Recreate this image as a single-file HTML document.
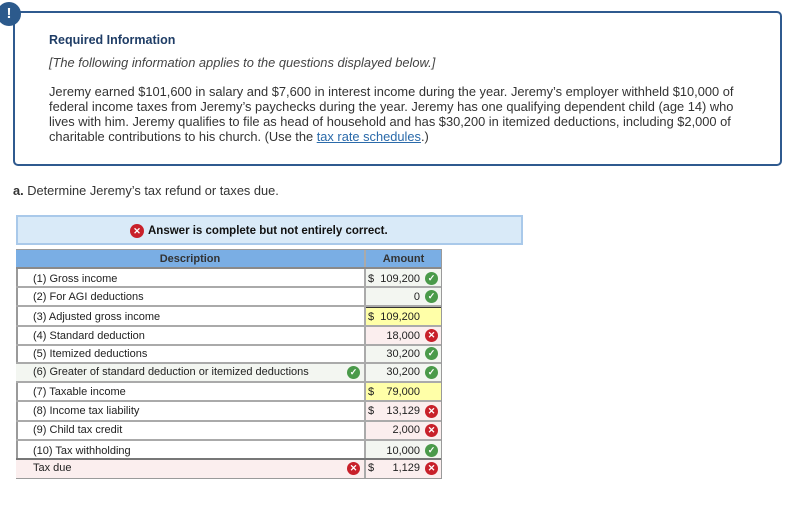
<!DOCTYPE html>
<html><head><meta charset="utf-8"><style>
*{margin:0;padding:0;box-sizing:border-box}
body{width:811px;height:511px;background:#fff;position:relative;font-family:"Liberation Sans",Arial,sans-serif;overflow:hidden}
.a{position:absolute;white-space:nowrap}
.box{left:13px;top:11px;width:769px;height:155px;border:2px solid #2f5a8f;border-radius:5px}
.ex{left:-3px;top:2px;width:24px;height:24px;border-radius:50%;background:#2c5a8c;color:#fff;font-weight:bold;font-size:15px;text-align:center;line-height:24px}
.t{font-size:12.85px;color:#333;left:49px}
.row{position:absolute;left:16px;width:425px;font-size:11px;color:#222}
.d{position:absolute;left:0;width:350px;top:0;bottom:0;border-right:2px solid #aaa;padding-left:17px}
.m{position:absolute;left:350px;width:75px;top:0;bottom:0;text-align:right;padding-right:21px}
.ic{position:absolute;width:13px;height:13px;border-radius:50%;color:#fff;font-size:9px;line-height:13px;text-align:center;font-weight:bold}
.ok{background:#4a9a4a}.no{background:#c8202a}
</style></head><body>
<div class="a box"></div>
<div class="a ex">!</div>
<div class="a" style="left:49px;top:33px;font-size:12.5px;font-weight:bold;color:#1f3d66">Required Information</div>
<div class="a t" style="top:55px;font-style:italic;color:#444">[The following information applies to the questions displayed below.]</div>
<div class="a t" style="top:84px">Jeremy earned $101,600 in salary and $7,600 in interest income during the year. Jeremy’s employer withheld $10,000 of</div>
<div class="a t" style="top:99px">federal income taxes from Jeremy’s paychecks during the year. Jeremy has one qualifying dependent child (age 14) who</div>
<div class="a t" style="top:114px">lives with him. Jeremy qualifies to file as head of household and has $30,200 in itemized deductions, including $2,000 of</div>
<div class="a t" style="top:129px">charitable contributions to his church. (Use the <span style="color:#2a6aaa;text-decoration:underline">tax rate schedules</span>.)</div>
<div class="a" style="left:13px;top:183px;font-size:12.8px;color:#333"><b>a.</b> Determine Jeremy’s tax refund or taxes due.</div>

<div class="a" style="left:16px;top:215px;width:507px;height:30px;background:#d9eaf8;border:2px solid #a9c9ea"></div>
<div class="a ic no" style="left:130px;top:224px;width:14px;height:14px;line-height:14px">✕</div>
<div class="a" style="left:148px;top:223px;font-size:11.5px;font-weight:bold;color:#111;line-height:16px">Answer is complete but not entirely correct.</div>

<div class="a" style="left:16px;top:249px;width:426px;height:230px;border:2px solid #9a9a9a;background:#fff"></div>
<div class="row" style="top:250px;height:19px;background:#7aaee4;border-bottom:2px solid #8a8a8a"><div class="d" style="text-align:center;padding:3px 0 0;font-weight:bold;color:#333;font-size:11px">Description</div><div class="m" style="text-align:center;padding:3px 0 0;font-weight:bold;color:#333">Amount</div></div>

<div class="row" style="top:269px;height:19px;border-bottom:2px solid #aaa"><div class="d" style="padding-top:4px">(1) Gross income</div><div class="m" style="background:#f3f6f1;padding-top:4px"><span style="position:absolute;left:2px">$</span>109,200</div><span class="ic ok" style="left:409px;top:3px">✓</span></div>
<div class="row" style="top:288px;height:19px;border-bottom:2px solid #aaa"><div class="d" style="padding-top:3px">(2) For AGI deductions</div><div class="m" style="background:#f3f6f1;padding-top:3px">0</div><span class="ic ok" style="left:409px;top:2px">✓</span></div>
<div class="row" style="top:307px;height:20px;border-bottom:2px solid #aaa"><div class="d" style="padding-top:4px">(3) Adjusted gross income</div><div class="m" style="background:#ffffa8;border-top:1px solid #333;padding-top:3px"><span style="position:absolute;left:2px">$</span>109,200</div></div>
<div class="row" style="top:327px;height:19px;border-bottom:2px solid #aaa"><div class="d" style="padding-top:3px">(4) Standard deduction</div><div class="m" style="background:#fbeeee;padding-top:3px">18,000</div><span class="ic no" style="left:409px;top:2px">✕</span></div>
<div class="row" style="top:346px;height:18px;border-bottom:2px solid #aaa"><div class="d" style="padding-top:2px">(5) Itemized deductions</div><div class="m" style="background:#f3f6f1;padding-top:2px">30,200</div><span class="ic ok" style="left:409px;top:1px">✓</span></div>
<div class="row" style="top:364px;height:19px;border-bottom:2px solid #aaa;background:#f3f6f1"><div class="d" style="padding-top:2px">(6) Greater of standard deduction or itemized deductions</div><div class="m" style="background:#f3f6f1;padding-top:2px">30,200</div><span class="ic ok" style="left:331px;top:2px">✓</span><span class="ic ok" style="left:409px;top:2px">✓</span></div>
<div class="row" style="top:383px;height:19px;border-bottom:2px solid #aaa"><div class="d" style="padding-top:3px">(7) Taxable income</div><div class="m" style="background:#ffffa8;padding-top:3px"><span style="position:absolute;left:2px">$</span>79,000</div></div>
<div class="row" style="top:402px;height:20px;border-bottom:2px solid #aaa"><div class="d" style="padding-top:3px">(8) Income tax liability</div><div class="m" style="background:#fbeeee;padding-top:3px"><span style="position:absolute;left:2px">$</span>13,129</div><span class="ic no" style="left:409px;top:3px">✕</span></div>
<div class="row" style="top:422px;height:19px;border-bottom:2px solid #aaa"><div class="d" style="padding-top:2px">(9) Child tax credit</div><div class="m" style="background:#fbeeee;padding-top:2px">2,000</div><span class="ic no" style="left:409px;top:2px">✕</span></div>
<div class="row" style="top:441px;height:19px;border-bottom:2px solid #777"><div class="d" style="padding-top:4px">(10) Tax withholding</div><div class="m" style="background:#f3f6f1;padding-top:4px">10,000</div><span class="ic ok" style="left:409px;top:3px">✓</span></div>
<div class="row" style="top:460px;height:18px;background:#fbeeee"><div class="d" style="padding-top:2px">Tax due</div><div class="m" style="background:#fbeeee;padding-top:2px"><span style="position:absolute;left:2px">$</span>1,129</div><span class="ic no" style="left:331px;top:2px">✕</span><span class="ic no" style="left:409px;top:2px">✕</span></div>
</body></html>
